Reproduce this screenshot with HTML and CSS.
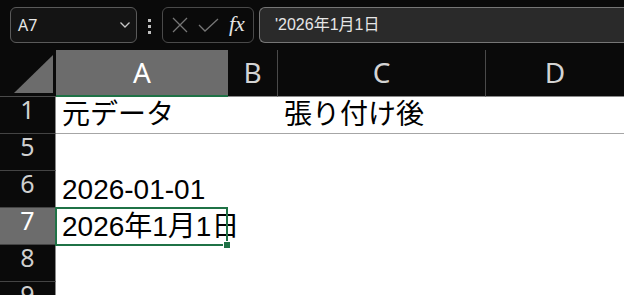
FILE: index.html
```html
<!DOCTYPE html>
<html lang="ja">
<head>
    <meta charset="UTF-8">
    <meta name="viewport" content="width=device-width, initial-scale=1.0">
    <title>元データ - Excel</title>
    <link rel="stylesheet" href="styles.css">
</head>
<body>
    <!-- Barra de fórmulas -->
    <header class="toolbar">
        <div class="namebox">
            <span>A7</span>
            <svg class="chevron" width="10" height="6" viewBox="0 0 10 6">
                <polyline points="0.5,0.5 5,5 9.5,0.5" fill="none" stroke="#c8c8c8" stroke-width="1.3"/>
            </svg>
        </div>
        <div class="grip"><i></i><i></i><i></i></div>
        <div class="fxbox">
            <svg width="16" height="16" viewBox="0 0 16 16">
                <path d="M1 1 L15 15 M15 1 L1 15" stroke="#767676" stroke-width="1.3"/>
            </svg>
            <svg width="21" height="14" viewBox="0 0 21 14">
                <polyline points="1,7 7,13 20,1" fill="none" stroke="#767676" stroke-width="1.3"/>
            </svg>
            <span class="fx">fx</span>
        </div>
        <div class="formula">'2026年1月1日</div>
    </header>

    <!-- Hoja -->
    <div class="sheet">
        <div class="corner"><span class="tri"></span></div>
        <div class="colhead active">A</div>
        <div class="colhead sep">B</div>
        <div class="colhead sep">C</div>
        <div class="colhead">D</div>

        <div class="rowhead">1</div>
        <div class="cell first">元データ</div>
        <div class="cell first"></div>
        <div class="cell first">張り付け後</div>
        <div class="cell first"></div>

        <div class="rowhead">5</div>
        <div class="cell"></div>
        <div class="cell"></div>
        <div class="cell"></div>
        <div class="cell"></div>

        <div class="rowhead">6</div>
        <div class="cell">2026-01-01</div>
        <div class="cell"></div>
        <div class="cell"></div>
        <div class="cell"></div>

        <div class="rowhead active">7</div>
        <div class="cell selected">2026年1月1日<span class="handle"></span></div>
        <div class="cell"></div>
        <div class="cell"></div>
        <div class="cell"></div>

        <div class="rowhead">8</div>
        <div class="cell"></div>
        <div class="cell"></div>
        <div class="cell"></div>
        <div class="cell"></div>

        <div class="rowhead">9</div>
        <div class="cell"></div>
        <div class="cell"></div>
        <div class="cell"></div>
        <div class="cell"></div>
    </div>
</body>
</html>
```

FILE: styles.css
```css
body {
    margin: 0;
    padding: 0;
    width: 624px;
    height: 295px;
    overflow: hidden;
    background-color: #0a0a0a;
    font-family: "Noto Sans", "Noto Sans CJK JP", sans-serif;
}

/* Barra de fórmulas */
.toolbar {
    height: 50px;
    display: flex;
    align-items: flex-start;
    padding: 7px 0 0 10px;
    box-sizing: border-box;
}

.namebox {
    width: 127px;
    height: 36px;
    box-sizing: border-box;
    border: 1px solid #5a5a5a;
    border-radius: 6px;
    background-color: #141414;
    display: flex;
    align-items: center;
    justify-content: space-between;
    padding: 0 6px 0 7px;
    color: #e6e6e6;
    font-size: 16px;
}

.grip {
    width: 25px;
    display: flex;
    flex-direction: column;
    align-items: center;
    gap: 3px;
    padding-top: 12px;
}

.grip i {
    width: 3px;
    height: 3px;
    background-color: #c0c0c0;
}

.fxbox {
    width: 92px;
    height: 36px;
    box-sizing: border-box;
    border: 1px solid #4a4a4a;
    border-radius: 6px;
    display: flex;
    align-items: center;
    padding: 0 0 0 9px;
    gap: 9px;
}

.fxbox svg + svg {
    margin-left: 1px;
}

.fx {
    font-family: "Liberation Serif", serif;
    font-style: italic;
    font-size: 22px;
    color: #e4e4e4;
    margin-left: 1px;
    margin-top: -3px;
}

.formula {
    flex: 1;
    margin-left: 5px;
    height: 36px;
    box-sizing: border-box;
    border: 1px solid #767676;
    border-right: none;
    border-radius: 6px 0 0 6px;
    background-color: #2a2a2a;
    color: #e6e6e6;
    font-family: "Liberation Sans", "Noto Sans CJK JP", sans-serif;
    font-size: 16px;
    line-height: 34px;
    padding-left: 15px;
}

/* Hoja */
.sheet {
    display: grid;
    grid-template-columns: 56px 172px 50px 208px 1fr;
    grid-template-rows: 47px repeat(6, 37px);
}

.corner {
    border-bottom: 1px solid #4a4a4a;
    position: relative;
}

.tri {
    position: absolute;
    left: 14px;
    top: 5px;
    width: 39px;
    height: 38px;
    background-color: #6c6c6c;
    clip-path: polygon(100% 0, 100% 100%, 0 100%);
}

.colhead {
    box-sizing: border-box;
    border-bottom: 1px solid #8a8a8a;
    color: #d4d4d4;
    font-size: 28px;
    line-height: 44px;
    text-align: center;
}

.colhead.sep {
    border-right: 1px solid #4a4a4a;
}

.colhead.active {
    background-color: #6c6c6c;
    color: #ffffff;
    border-bottom: 2px solid #1f7246;
}

.rowhead {
    box-sizing: border-box;
    border-bottom: 1px solid #444;
    border-right: 1px solid #8a8a8a;
    color: #d0d0d0;
    font-size: 25px;
    line-height: 24px;
    text-align: center;
}

.rowhead.active {
    background-color: #6c6c6c;
    color: #ffffff;
}

.cell {
    background-color: #ffffff;
    color: #000000;
    font-family: "Liberation Sans", "Noto Sans CJK JP", sans-serif;
    font-size: 28px;
    line-height: 37px;
    padding-left: 6px;
    white-space: nowrap;
    box-sizing: border-box;
}

.cell.first {
    border-bottom: 1px solid #a6a6a6;
    line-height: 36px;
}

.cell.selected {
    position: relative;
    z-index: 1;
}

.cell.selected::after {
    content: "";
    position: absolute;
    top: -1px;
    left: -1px;
    right: 0;
    bottom: -1px;
    border: 2px solid #1f7246;
}

.handle {
    position: absolute;
    right: -3px;
    bottom: -4px;
    width: 6px;
    height: 6px;
    background-color: #1f7246;
    border: 1px solid #ffffff;
    z-index: 2;
}
```
